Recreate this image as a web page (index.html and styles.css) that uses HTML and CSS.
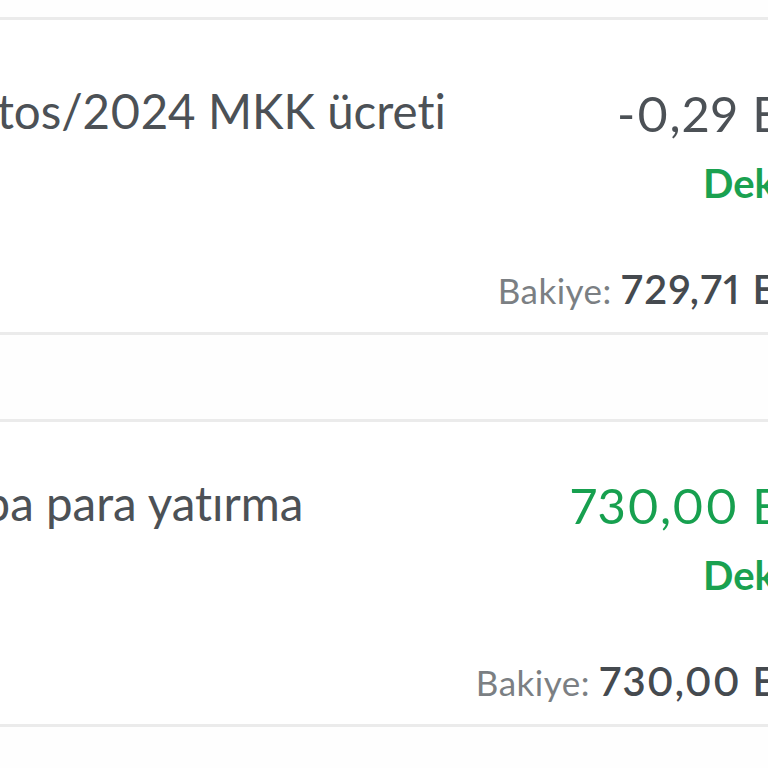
FILE: index.html
```html
<!DOCTYPE html>
<html lang="tr">
<head>
	<meta charset="UTF-8">
	<title>Hesap hareketleri</title>
	<link rel="stylesheet" href="styles.css">
</head>
<body>
	<main class="list">
		<article class="txn">
			<div class="txn-title">Ağustos/2024 MKK ücreti</div>
			<div class="txn-side">
				<div class="txn-amount">-0,29 EUR</div>
				<a class="txn-receipt" href="#">Dekont</a>
				<div class="txn-balance"><span class="label">Bakiye:</span> <b>729,71 EUR</b></div>
			</div>
		</article>

		<article class="txn txn-deposit">
			<div class="txn-title">Avrupa para yatırma</div>
			<div class="txn-side">
				<div class="txn-amount plus">730,00 EUR</div>
				<a class="txn-receipt" href="#">Dekont</a>
				<div class="txn-balance"><span class="label">Bakiye:</span> <b>730,00 EUR</b></div>
			</div>
		</article>
	</main>
</body>
</html>
```
FILE: styles.css
```css
html, body {
	margin: 0;
	padding: 0;
	overflow: hidden;
	background: #fefefe;
}
body {
	font-family: Lato, "Noto Sans", sans-serif;
	color: #4c5156;
	font-variant-ligatures: none;
	font-variant-numeric: proportional-nums;
}
/* the list is wider than the screen, both sides are cut */
.list {
	width: 958px;
	margin-left: -107px;
	padding-top: 17px;
}
.txn {
	display: flex;
	justify-content: space-between;
	align-items: flex-start;
	padding: 62px 0 20px;
	border-top: 3px solid #ebebeb;
	border-bottom: 3px solid #ebebeb;
	background: #fff;
}
.txn-deposit {
	margin-top: 84px;
	padding-top: 52px;
}
.txn-title {
	font-size: 47.5px;
	line-height: 58px;
}
.txn-deposit .txn-title {
	margin-left: -8px;
}
.txn-side {
	display: flex;
	flex-direction: column;
	align-items: flex-end;
	padding-right: 16px;
}
.txn-amount {
	margin-top: 2px;
	margin-right: -16px;
	font-size: 49px;
	line-height: 58px;
	letter-spacing: 1.2px;
}
.txn-amount.plus {
	color: #17a04f;
}
.txn-receipt {
	margin-top: 17px;
	font-size: 40px;
	line-height: 48px;
	font-weight: 700;
	color: #1aa150;
	text-decoration: none;
}
.txn-balance {
	margin-top: 60px;
	font-size: 35px;
	line-height: 44px;
	letter-spacing: 0.5px;
}
.txn-balance .label {
	color: #7b7f83;
}
.txn-balance b {
	font-size: 40px;
	font-weight: 600;
	letter-spacing: 1.5px;
	color: #454a4f;
}
```
